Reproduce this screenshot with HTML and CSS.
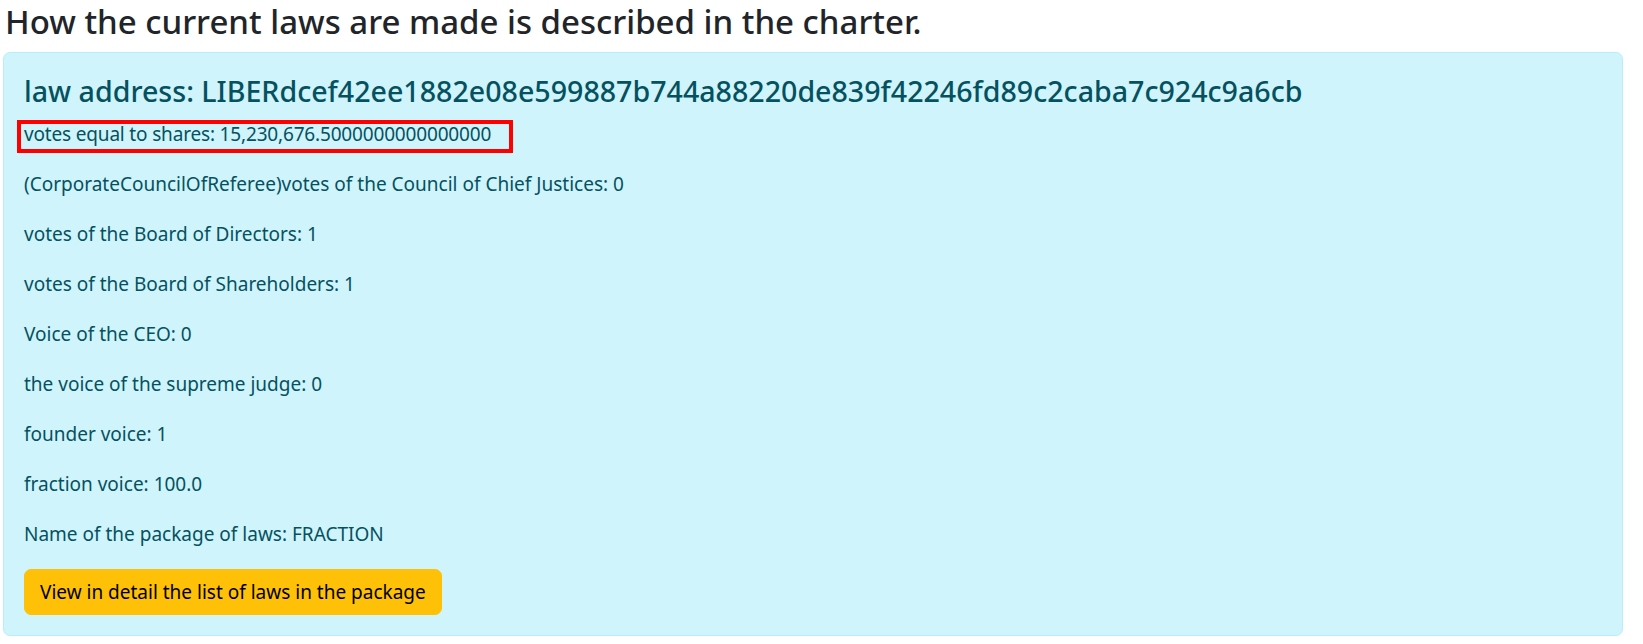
FILE: index.html
```html
<!DOCTYPE html>
<html lang="en">
<head>
<meta charset="utf-8">
<title>Charter</title>
<link rel="stylesheet" href="styles.css">
</head>
<body>
<div class="page">
  <h3 class="title">How the current laws are made is described in the charter.</h3>
  <div class="alert">
    <h4 class="law-title">law address: LIBERdcef42ee1882e08e599887b744a88220de839f42246fd89c2caba7c924c9a6cb</h4>
    <p class="row"><span class="marked">votes equal to shares: 15,230,676.5000000000000000</span></p>
    <p class="row">(CorporateCouncilOfReferee)votes of the Council of Chief Justices: 0</p>
    <p class="row">votes of the Board of Directors: 1</p>
    <p class="row">votes of the Board of Shareholders: 1</p>
    <p class="row">Voice of the CEO: 0</p>
    <p class="row">the voice of the supreme judge: 0</p>
    <p class="row">founder voice: 1</p>
    <p class="row">fraction voice: 100.0</p>
    <p class="row">Name of the package of laws: FRACTION</p>
    <button class="btn" type="button">View in detail the list of laws in the package</button>
  </div>
</div>
</body>
</html>
```
FILE: styles.css
```css
html, body {
  margin: 0;
  padding: 0;
  background: #fff;
}
body {
  font-family: "Noto Sans", "Open Sans", sans-serif;
  font-size: 19px;
  line-height: 30px;
  color: #212529;
}
.page {
  padding: 0 20px 0 3px;
}
.title {
  margin: 1px 0 9px 2px;
  font-size: 33px;
  line-height: 42px;
  font-weight: 500;
  color: #212529;
}
.alert {
  background: #cff4fc;
  border: 1px solid #b6effb;
  border-radius: 7px;
  padding: 20px;
  color: #055160;
}
.law-title {
  margin: 0 0 10px;
  font-size: 28.6px;
  line-height: 36px;
  font-weight: 500;
  color: #055160;
}
.row {
  margin: 0 0 20px;
}
.marked {
  position: relative;
  letter-spacing: -0.17px;
}
.marked::after {
  content: "";
  position: absolute;
  left: -7px;
  right: -22px;
  top: -1px;
  bottom: -6px;
  border: 4px solid #ff0000;
}
.btn {
  display: inline-block;
  font-family: inherit;
  font-size: 19px;
  line-height: 30px;
  padding: 7px 15px;
  border: 1px solid #ffc107;
  background: #ffc107;
  color: #000;
  border-radius: 7px;
}
```
